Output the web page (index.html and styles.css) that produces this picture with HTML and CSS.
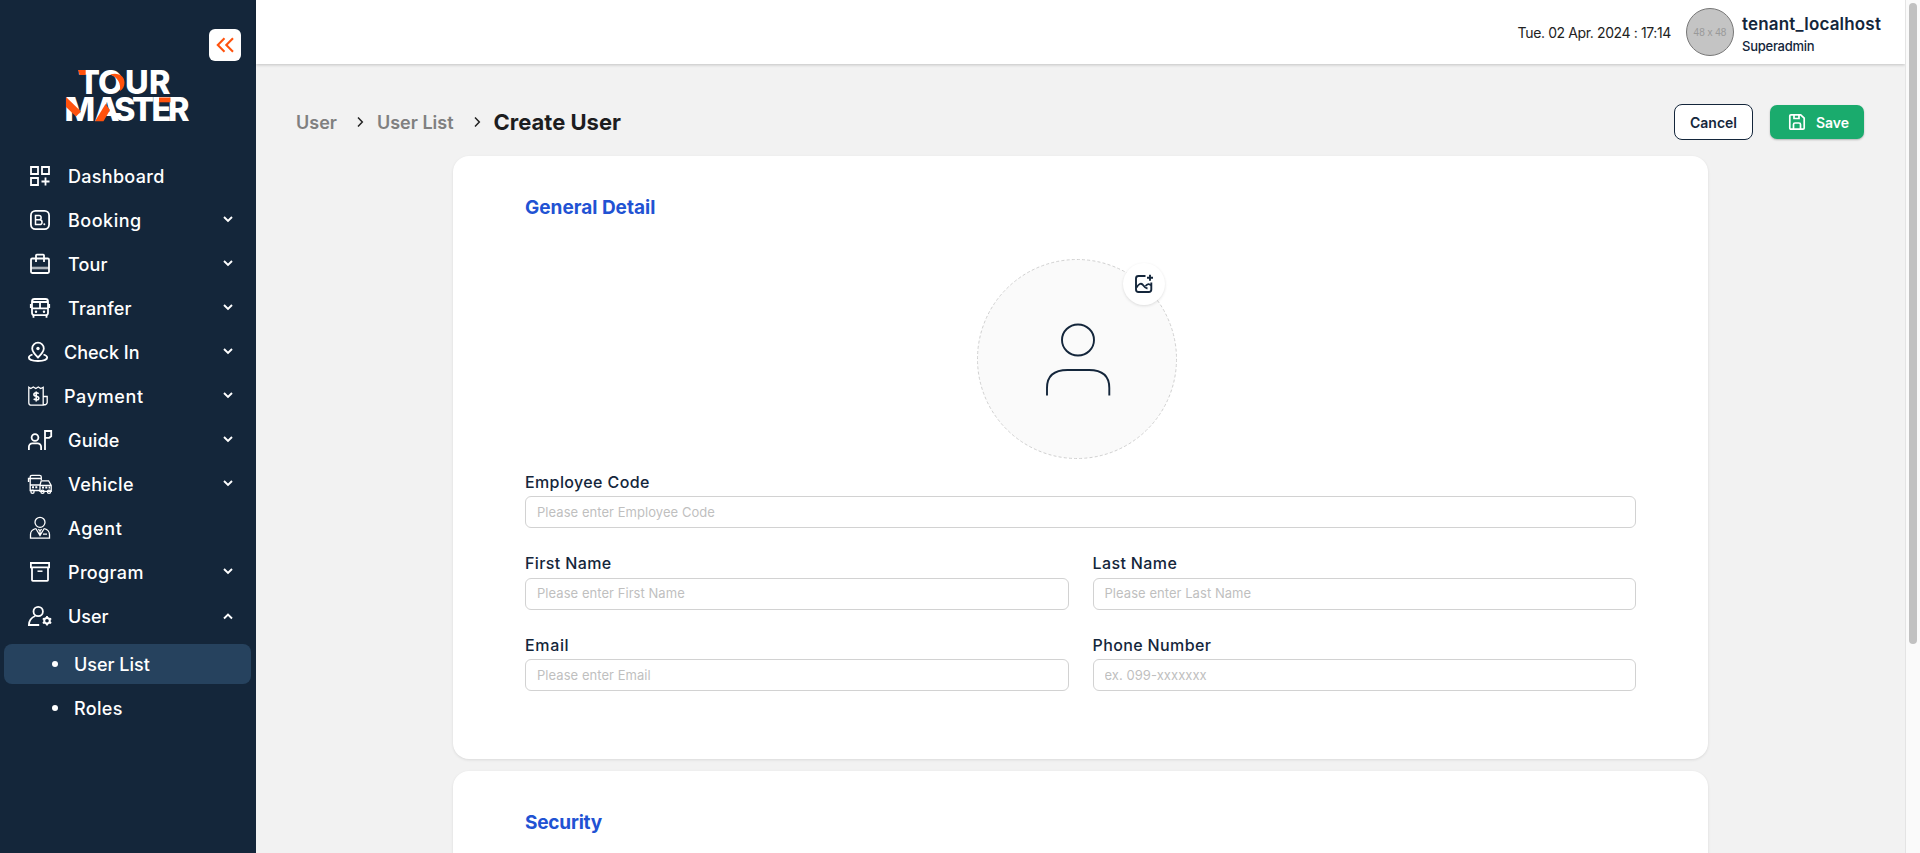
FILE: index.html
```html
<!DOCTYPE html>
<html lang="en">
<head>
<meta charset="utf-8">
<title>Create User</title>
<link rel="stylesheet" href="styles.css">
</head>
<body>
<svg class="defs" width="0" height="0">
  <symbol id="down" viewBox="0 0 12 12"><path d="M2 4l4 4 4-4" fill="none" stroke="currentColor" stroke-width="1.9"/></symbol>
  <symbol id="up" viewBox="0 0 12 12"><path d="M2 9.500l4-4 4 4" fill="none" stroke="currentColor" stroke-width="1.9"/></symbol>
  <symbol id="right" viewBox="0 0 12 12"><path d="M4 1.600L8.300 6 4 10.400" fill="none" stroke="currentColor" stroke-width="1.5"/></symbol>
</svg>
<div class="app">
  <aside class="sidebar">
    <div class="collapse-row">
      <button class="collapse"><svg width="20" height="20" viewBox="0 0 20 20"><path d="M9.500 3.200L2.800 10l6.700 6.800M18 3.200L11.300 10l6.700 6.800" fill="none" stroke="#ff520d" stroke-width="2.100"/></svg></button>
    </div>
    <svg class="logo" width="124" height="54" viewBox="0 0 124 54">
      <g class="logo-text">
        <text x="12 32 59 83" y="24.800">TOUR</text>
        <text x="-1.500 28.500 48 66 85.500 102" y="52.200">MASTER</text>
      </g>
      <g fill="#ff520d">
        <path d="M12 1.100h7.700v5h-6z"/>
        <path d="M44 5.500C53 3 58.500 7.500 58.500 13.500c0 4-1.500 6.500-4.500 8.500C55 15 52 8 44 5.500z"/>
        <path d="M0 28L15 42.500l-5 5L0 38z"/>
        <path d="M39.500 35l4.500 6-6.500 11.200h-8.500z"/>
        <path d="M93 28.500h11.500v4.800H93z"/>
      </g>
    </svg>
    <nav class="nav">
      <a class="item"><svg class="ico" viewBox="0 0 24 24"><path d="M3 3h7v7H3zM14 3h7v7h-7zM3 14h7v7H3zM17.500 13.500v8M13.500 17.500h8"/></svg><span class="t-dash">Dashboard</span></a>
      <a class="item"><svg class="ico" viewBox="0 0 24 24"><rect x="2.900" y="2.900" width="18.200" height="18.200" rx="4.500"/><path d="M7.500 7.500h3.500a2.100 2.100 0 010 4.300H7.500zM7.500 11.800h4.200a2.300 2.300 0 010 4.700H7.500z" stroke-width="1.500"/><circle cx="16.300" cy="16.300" r="1" class="fill"/></svg><span class="t-book">Booking</span><svg class="chev"><use href="#down"/></svg></a>
      <a class="item"><svg class="ico" viewBox="0 0 24 24"><rect x="3" y="6.500" width="18" height="14.500" rx="1.200"/><path d="M8 10V3.500q0-.8.800-.8h6.400q.8 0 .8.800V10"/><path d="M3 16h18" stroke-width="2.600" opacity=".65"/></svg><span class="t-tour">Tour</span><svg class="chev"><use href="#down"/></svg></a>
      <a class="item"><svg class="ico" viewBox="0 0 24 24"><rect x="4" y="3" width="16" height="16.200" rx="2.500"/><path d="M4 6h16M4 12.300h16M12 6v6.300M5.500 19v2.800M18.500 19v2.800M2.800 8v4M21.200 8v4"/><circle cx="8" cy="15.700" r="1.200" class="fill"/><circle cx="16" cy="15.700" r="1.200" class="fill"/></svg><span class="t-tran">Tranfer</span><svg class="chev"><use href="#down"/></svg></a>
      <a class="item near"><svg class="ico" viewBox="0 0 24 24"><path d="M12 17.500C8.500 14 6.200 11.500 6.200 8.400a5.800 5.800 0 0111.600 0c0 3.100-2.300 5.600-5.800 9.100z"/><circle cx="12" cy="8.500" r="1.700" class="fill"/><path d="M6.500 14.500C4 15.300 2.800 16.300 2.800 17.500c0 2 4 3.500 9.200 3.500s9.200-1.500 9.200-3.500c0-1.200-1.200-2.200-3.700-3"/></svg><span>Check In</span><svg class="chev"><use href="#down"/></svg></a>
      <a class="item near"><svg class="ico thin" viewBox="0 0 24 24"><path d="M2.800 3.200l2 1.300L7.300 3l2.500 1.500L12.300 3l2.400 1.500 2.500-1.300V21.200H5.300a2.500 2.500 0 01-2.500-2.500zM17.200 12.500h4v6.200a2.500 2.500 0 01-4 1.500"/><path stroke-width="1.600" d="M12.600 9.700q-.8-1-2.400-1-2.300 0-2.300 1.700 0 1.400 2.400 1.800 2.500.4 2.500 2 0 1.700-2.500 1.700-1.700 0-2.600-1.100M10.200 7.400v10"/></svg><span class="t-pay">Payment</span><svg class="chev"><use href="#down"/></svg></a>
      <a class="item"><svg class="ico wide" viewBox="0 0 28 24"><circle cx="9" cy="9.500" r="3.400"/><path d="M2.900 22v-3.200a3.500 3.500 0 013.500-3.500h5.200a3.500 3.500 0 013.500 3.500V22M19 22V3h6.200v5.300l-2 1.500H19"/></svg><span class="t-guide">Guide</span><svg class="chev"><use href="#down"/></svg></a>
      <a class="item"><svg class="ico wide thin" viewBox="0 0 28 24"><path d="M13.500 18.500H4.200V5q0-1.700 1.700-1.700h7.700q1.700 0 1.700 1.700v3M4.200 6.500h11M2.500 10V6.500h1.700M4.200 13h9.500M14 19.300V13l1.200-4.200h7.400l2.600 4.700v5.800zM14 13.500h11"/><path d="M6 15.300h6.500M16 15.500h8" stroke-width="2" stroke-dasharray="2 1.300"/><circle cx="6.500" cy="19.800" r="1.600"/><circle cx="16.500" cy="19.800" r="1.600"/><circle cx="23" cy="19.800" r="1.600"/></svg><span class="t-veh">Vehicle</span><svg class="chev"><use href="#down"/></svg></a>
      <a class="item"><svg class="ico thin" viewBox="0 0 24 24"><circle cx="12" cy="6.300" r="5"/><path d="M7.800 12.500C4.500 13.500 2.500 15.500 2.500 18.500v3.700h19v-3.700c0-3-2-5-5.300-6M7.800 12.500L12 19.500l4.200-7M10.300 13.200l1.700 1.500 1.700-1.500M12 14.500v4M15 18.200h4"/></svg><span class="t-agent">Agent</span></a>
      <a class="item"><svg class="ico" viewBox="0 0 24 24"><path d="M2.900 3h18.200v4.300H2.900zM4 7.300V20q0 .8.800.8h14.400q.8 0 .8-.8V7.300"/><path d="M9.500 11.200h5" stroke-width="1.500"/></svg><span class="t-prog">Program</span><svg class="chev"><use href="#down"/></svg></a>
      <a class="item"><svg class="ico wide" viewBox="0 0 28 24"><circle cx="12.200" cy="7.500" r="4.700"/><path d="M9.200 12C5.500 13.500 3 16.500 2.900 21h10.300"/><circle cx="21" cy="16.800" r="2.800" stroke-width="2"/><path d="M21 12v2.200M21 19.400v2.200M16.800 14.400l2 1.200M23.200 18l2 1.200M16.800 19.200l2-1.200M23.200 15.600l2-1.200"/></svg><span>User</span><svg class="chev"><use href="#up"/></svg></a>
      <div class="sub">
        <a class="subitem active"><i class="dot"></i><span>User List</span></a>
        <a class="subitem"><i class="dot"></i><span class="t-roles">Roles</span></a>
      </div>
    </nav>
  </aside>
  <div class="content">
    <header class="topbar">
      <span class="date">Tue. 02 Apr. 2024 : 17:14</span>
      <span class="avatar">48 x 48</span>
      <div class="who"><div class="name">tenant_localhost</div><div class="role">Superadmin</div></div>
    </header>
    <main class="main">
      <div class="head">
        <div class="crumbs">
          <span class="crumb">User</span><svg class="sep"><use href="#right"/></svg>
          <span class="crumb">User List</span><svg class="sep"><use href="#right"/></svg>
          <h1 class="title">Create User</h1>
        </div>
        <div class="actions">
          <button class="btn cancel">Cancel</button>
          <button class="btn save"><svg width="18" height="18" viewBox="0 0 18 18"><path d="M1.800 3q0-1.200 1.200-1.200h9.700L16.200 5v10q0 1.200-1.200 1.200H3q-1.200 0-1.200-1.200zM5.500 16v-4.500q0-1.500 1.500-1.500h4q1.500 0 1.500 1.500V16M6 2v3.500h5V2" fill="none" stroke="#fff" stroke-width="1.700"/></svg><span>Save</span></button>
        </div>
      </div>
      <section class="card general">
        <h2>General Detail</h2>
        <div class="photo">
          <svg width="200" height="200" viewBox="0 0 200 200"><circle cx="100" cy="100" r="99.500" fill="#fafafa" stroke="#d0d0d0" stroke-dasharray="3 2.200"/><g fill="none" stroke="#14263b" stroke-width="1.900"><ellipse cx="101" cy="81" rx="16" ry="15.500"/><path d="M70 136.500V129Q70 111 90.500 111h21.500Q132.300 111 132.300 129v7.500"/></g></svg>
          <button class="upload"><svg width="20" height="20" viewBox="0 0 20 20" fill="none" stroke="#14263b" stroke-width="1.900"><path d="M11.500 2H4.500Q2 2 2 4.500v11Q2 18 4.500 18h10.300q2.500 0 2.500-2.500V8.500"/><path d="M2.500 13.500Q6 8 8.500 10.500q2.500 3.500 5 4M11.500 12q3-3.500 5.500-.5M16 .8v6M13 3.800h6"/></svg></button>
        </div>
        <form class="form">
          <label class="field full"><span>Employee Code</span><input placeholder="Please enter Employee Code"></label>
          <label class="field raised"><span>First Name</span><input placeholder="Please enter First Name"></label>
          <label class="field raised"><span>Last Name</span><input placeholder="Please enter Last Name"></label>
          <label class="field"><span class="l-email">Email</span><input placeholder="Please enter Email"></label>
          <label class="field"><span>Phone Number</span><input placeholder="ex. 099-xxxxxxx"></label>
        </form>
      </section>
      <section class="card"><h2 class="h-sec">Security</h2></section>
    </main>
  </div>
  <div class="scrollbar"><div class="thumb"></div></div>
</div>
</body>
</html>
```
FILE: styles.css
```css
* { box-sizing: border-box; }
body { margin: 0; overflow: hidden; font-family: Inter, "Noto Sans", sans-serif; color: #14263b; }
.defs { display: none; }
button { font-family: inherit; padding: 0; border: 0; }
.app { display: grid; grid-template-columns: 256px 1fr 15px; height: 853px; overflow: hidden; background: #f2f2f2; }

.sidebar { background: #14263a; color: #fff; display: flex; flex-direction: column; }
.collapse-row { display: flex; justify-content: flex-end; padding: 29px 15px 0 0; }
.collapse { width: 32px; height: 32px; border-radius: 6px; background: #fff; display: grid; place-items: center; }
.logo { margin: 8px 0 0 66px; overflow: visible; }
.logo-text { font-size: 32.5px; font-weight: 800; fill: #fff; }
.nav { margin-top: 31px; display: flex; flex-direction: column; }
.item { height: 44px; display: flex; align-items: center; padding: 0 22px 0 28px; font-size: 18px; font-weight: 500; }
.item span { flex: 1; }
.t-dash { letter-spacing: .3px; }
.t-book { letter-spacing: .5px; }
.t-tour, .t-tran { letter-spacing: .15px; }
.t-pay, .t-agent { letter-spacing: .65px; }
.t-guide { letter-spacing: .2px; }
.t-veh { letter-spacing: .4px; }
.t-prog, .t-roles { letter-spacing: .35px; }
.ico { width: 24px; height: 24px; margin-right: 16px; flex: none; fill: none; stroke: #fff; stroke-width: 1.8; }
.ico .fill { fill: #fff; stroke: none; }
.ico.thin { stroke-width: 1.3; }
.ico.wide { width: 28px; margin-left: -2px; margin-right: 14px; }
.near .ico { margin-left: -2px; margin-right: 14px; }
.chev { width: 12px; height: 12px; margin-top: -3px; }
.sub { padding: 6px 5px 0 4px; }
.subitem { display: flex; align-items: center; height: 40px; padding-left: 48px; margin-bottom: 4px; border-radius: 8px; font-size: 18px; font-weight: 500; }
.subitem.active { background: #26425e; }
.dot { width: 6px; height: 6px; border-radius: 50%; background: #fff; margin-right: 16px; }

.topbar { height: 64px; background: #fff; box-shadow: 0 1px 3px rgba(0,0,0,.2); display: flex; align-items: center; justify-content: flex-end; padding-right: 24px; }
.date { font-size: 14px; letter-spacing: -.38px; color: #222; margin-right: 15px; }
.avatar { width: 48px; height: 48px; border-radius: 50%; border: 1px solid #777; background: #c4c4c4; color: #999; font: 10px "Liberation Sans", sans-serif; white-space: nowrap; display: grid; place-items: center; margin-right: 8px; }
.who { width: 139px; padding-top: 4px; }
.name { font-size: 17px; font-weight: 600; line-height: 24px; letter-spacing: .18px; }
.role { font-size: 13px; font-weight: 500; line-height: 20px; letter-spacing: -.25px; }

.main { padding: 40px 40px 0; }
.head { display: flex; justify-content: space-between; height: 36px; align-items: center; }
.crumbs { display: flex; align-items: center; }
.crumb { color: #808080; font-size: 18px; font-weight: 600; }
.sep { width: 12px; height: 12px; color: #222; margin: 0 11px 0 17px; }
.title { margin: 0; color: #1d1d1f; font-size: 22px; font-weight: 700; }
.actions { display: flex; align-items: center; gap: 17px; }
.btn { font-size: 14px; font-weight: 600; }
.cancel { width: 79px; height: 36px; border: 1px solid #14263b; border-radius: 8px; background: #fff; color: #14263b; }
.save { width: 94px; height: 34px; margin-right: 1px; padding-left: 3px; border-radius: 7px; background: #1aab6d; color: #fff; display: flex; align-items: center; justify-content: center; gap: 10px; box-shadow: 0 1px 2px rgba(0,0,0,.25); }

.card { width: 1255px; height: 603px; margin: 16px 0 12px 157px; padding: 38px 72px; background: #fff; border-radius: 16px; box-shadow: 0 1px 3px rgba(0,0,0,.1); }
.card + .card { margin-top: 0; }
h2 { margin: 0; color: #2152d3; font-size: 19px; font-weight: 700; line-height: 27px; }
.h-sec { letter-spacing: -.2px; }
.photo { position: relative; width: 200px; height: 200px; margin: 38px 0 0 452px; }
.upload { position: absolute; left: 146px; top: 4px; width: 42px; height: 42px; border-radius: 50%; background: #fff; display: grid; place-items: center; box-shadow: 0 1px 3px rgba(0,0,0,.12); }
.form { display: grid; grid-template-columns: 1fr 1fr; gap: 22px 24px; margin-top: 10px; }
.full { grid-column: 1 / -1; }
.field { display: flex; flex-direction: column; height: 59.5px; font-size: 16px; font-weight: 500; line-height: 27px; letter-spacing: .38px; }
.raised span { margin: -1px 0 1px; }
.l-email { letter-spacing: .65px; }
input { height: 32px; flex: none; padding: 0 11px 1px; border: 1px solid #d2d2d2; border-radius: 6px; font-family: inherit; font-size: 13px; letter-spacing: .05px; outline: 0; }
input::placeholder { color: #bfbfbf; opacity: 1; }

.scrollbar { background: #fafafa; border-left: 1px solid #e4e4e4; padding: 3px 0 0 3px; }
.thumb { width: 8px; height: 641px; border-radius: 4px; background: #c1c1c1; }
```
